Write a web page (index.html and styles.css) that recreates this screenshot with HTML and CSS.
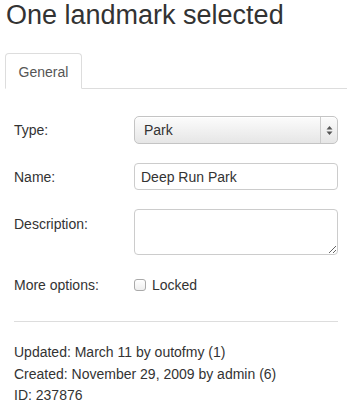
FILE: index.html
```html
<!DOCTYPE html>
<html lang="en">
<head>
  <meta charset="UTF-8">
  <meta name="viewport" content="width=device-width, initial-scale=1">
  <title>One landmark selected</title>
  <link rel="stylesheet" href="styles.css">
</head>
<body>
  <div class="panel">
    <h1>One landmark selected</h1>

    <ul class="tabs">
      <li class="tab active">General</li>
    </ul>

    <form class="form">
      <div class="row">
        <label>Type:</label>
        <div class="select">
          <span>Park</span>
          <span class="arrows">
            <svg width="7" height="11" viewBox="0 0 7 11"><path d="M3.5 1 L6.5 4.5 H0.5 Z M3.5 10 L6.5 6.5 H0.5 Z" fill="#555"/></svg>
          </span>
        </div>
      </div>

      <div class="row">
        <label>Name:</label>
        <input type="text" class="field" value="Deep Run Park">
      </div>

      <div class="row top">
        <label>Description:</label>
        <textarea class="field area"></textarea>
      </div>

      <div class="row">
        <label>More options:</label>
        <span class="check"><span class="box"></span>Locked</span>
      </div>
    </form>

    <hr>

    <div class="meta">
      <div>Updated: March 11 by outofmy (1)</div>
      <div>Created: November 29, 2009 by admin (6)</div>
      <div>ID: 237876</div>
    </div>
  </div>
</body>
</html>
```

FILE: styles.css
```css
* {
  box-sizing: border-box;
}

body {
  margin: 0;
  background: #fff;
  color: #333;
  font-family: "Liberation Sans", Arial, sans-serif;
  font-size: 14px;
}

.panel {
  padding: 0 2px 0 5px;
}

h1 {
  margin: 0;
  padding: 0 0 0 1px;
  font-size: 27px;
  font-weight: normal;
  line-height: 31px;
  color: #333;
}

.tabs {
  list-style: none;
  margin: 22px 0 0;
  padding: 0;
  display: flex;
  border-bottom: 1px solid #ddd;
}

.tab {
  width: 77px;
  height: 36px;
  line-height: 36px;
  text-align: center;
  color: #555;
  border: 1px solid #ddd;
  border-bottom-color: #fff;
  border-radius: 4px 4px 0 0;
  margin-bottom: -1px;
  background: #fff;
}

.form {
  padding: 27px 9px 0 9px;
}

.row {
  display: flex;
  align-items: center;
  margin-bottom: 19px;
}

.row.top {
  align-items: flex-start;
  margin-bottom: 22px;
}

.row.top label {
  padding-top: 7px;
}

.row label {
  width: 120px;
  flex: none;
}

.select {
  flex: 1;
  height: 28px;
  display: flex;
  align-items: center;
  justify-content: space-between;
  padding-left: 9px;
  border: 1px solid #c4c4c4;
  border-radius: 5px;
  background: linear-gradient(#fcfcfc, #e6e6e6);
  box-shadow: inset 0 1px 0 #fff;
}

.arrows {
  width: 17px;
  height: 100%;
  border-left: 1px solid #ccc;
  display: flex;
  align-items: center;
  justify-content: center;
}

.field {
  flex: 1;
  height: 27px;
  padding: 0 6px;
  border: 1px solid #ccc;
  border-radius: 4px;
  font: inherit;
  color: #333;
  background: #fff;
}

.area {
  height: 46px;
}

.check {
  display: flex;
  align-items: center;
  gap: 6px;
}

.box {
  width: 12px;
  height: 12px;
  border: 1px solid #aaa;
  border-radius: 3px;
  background: linear-gradient(#fff, #eee);
}

hr {
  margin: 28px 9px 0 9px;
  border: none;
  border-top: 1px solid #ddd;
}

.meta {
  padding: 20px 9px 0 9px;
  line-height: 21.5px;
}
```
